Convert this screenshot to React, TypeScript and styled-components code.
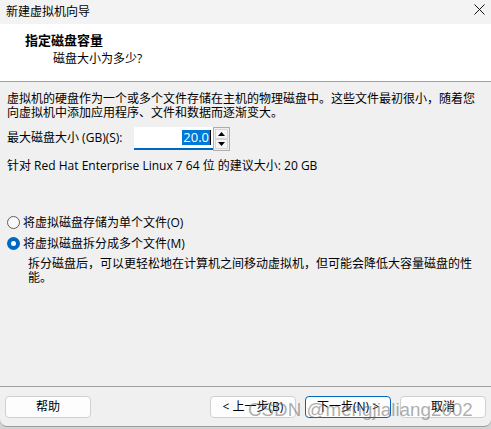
import React from "react";
import styled, { createGlobalStyle, css } from "styled-components";

const Global = createGlobalStyle`
  html, body { margin: 0; padding: 0; background: #d4d4d4; }
  body {
    font-family: "Open Sans", "Noto Sans CJK SC", sans-serif;
    font-size: 12px;
    color: #000;
  }
  #root { width: 491px; height: 429px; overflow: hidden; }
  * { box-sizing: border-box; }
`;

const Window = styled.div`
  position: relative;
  width: 491px;
  height: 427px;
  display: flex;
  flex-direction: column;
  background: #f0f0f0;
  border-bottom: 1px solid #9c9c9c;
  border-radius: 0 0 7px 7px;
  overflow: hidden;
`;

const TitleBar = styled.div`
  height: 24px;
  flex: none;
  display: flex;
  align-items: center;
  justify-content: space-between;
  padding: 0 6px;
  background: #f3f3f3;
`;

const Title = styled.span`
  font-size: 12px;
  line-height: 16px;
`;

const CloseSvg = styled.svg`
  margin-bottom: 5px;
`;

const Header = styled.div`
  height: 58px;
  flex: none;
  background: #fff;
  border-bottom: 1px solid #a0a0a0;
  padding: 8px 0 0 25px;
`;

const Heading = styled.div`
  font-weight: 700;
  font-size: 13px;
  line-height: 16px;
`;

const Subtitle = styled.div`
  margin-top: 3px;
  padding-left: 28px;
  line-height: 16px;
`;

const Content = styled.div`
  flex: 1;
  display: flex;
  flex-direction: column;
  padding: 10px 7px 0;
`;

const Para = styled.p`
  margin: 0;
  line-height: 14px;
`;

const SizeRow = styled.div`
  margin-top: 7px;
  display: flex;
  align-items: flex-start;
  height: 24px;
`;

const SizeLabel = styled.label`
  width: 127px;
  line-height: 22px;
  white-space: nowrap;
`;

const NumberField = styled.div`
  width: 79px;
  height: 23px;
  background: #fff;
  border-bottom: 2px solid #0067c0;
  display: flex;
  align-items: center;
  justify-content: flex-end;
  padding-right: 2px;
`;

const Selected = styled.span`
  background: #0078d7;
  color: #fff;
  font-size: 13px;
  line-height: 15px;
  padding: 0 1px;
`;

const Caret = styled.span`
  width: 1px;
  height: 15px;
  background: #000;
`;

const Spinner = styled.div`
  width: 17px;
  height: 24px;
  border: 1px solid #adadad;
  display: flex;
  flex-direction: column;
  padding: 1px;
`;

const SpinButton = styled.div`
  flex: 1;
  border: 1px solid #d6d6d6;
  background: #f5f5f5;
  display: flex;
  align-items: center;
  justify-content: center;
`;

const Recommend = styled.div`
  margin-top: 8px;
  line-height: 14px;
`;

const RadioRow = styled.div<{ $first?: boolean }>`
  margin-top: ${(p) => (p.$first ? "41px" : "5px")};
  display: flex;
  align-items: center;
  gap: 3px;
  height: 16px;
`;

const RadioCircle = styled.span<{ $checked?: boolean }>`
  width: 13px;
  height: 13px;
  border-radius: 50%;
  flex: none;
  display: flex;
  align-items: center;
  justify-content: center;
  ${(p) =>
    p.$checked
      ? css`
          background: #0067c0;
          &::after {
            content: "";
            width: 5px;
            height: 5px;
            border-radius: 50%;
            background: #fff;
          }
        `
      : css`
          background: #fafafa;
          border: 1px solid #5e5e5e;
        `}
`;

const Desc = styled.div`
  margin-top: 6px;
  padding-left: 21px;
  max-width: 471px;
  line-height: 14px;
`;

const Footer = styled.div`
  flex: none;
  height: 40px;
  border-top: 1px solid #a0a0a0;
  padding: 9px 5px 0;
  display: flex;
  align-items: flex-start;
`;

const NavGroup = styled.div`
  margin-left: auto;
  display: flex;
  gap: 9px;
`;

const Button = styled.button<{ $default?: boolean }>`
  width: 86px;
  height: 22px;
  padding: 0;
  font-family: inherit;
  font-size: 12px;
  color: #000;
  background: #fdfdfd;
  border: 1px solid ${(p) => (p.$default ? "#0067c0" : "#d0d0d0")};
  border-radius: 4px;
  line-height: 18px;
  white-space: nowrap;
`;

const Watermark = styled.div`
  position: absolute;
  left: 248px;
  top: 400px;
  font-family: "Liberation Sans", Arial, sans-serif;
  font-size: 18.8px;
  line-height: 20px;
  color: rgba(105, 105, 105, 0.55);
  white-space: nowrap;
  pointer-events: none;
`;

const CloseIcon = () => (
  <CloseSvg width="11" height="11" viewBox="0 0 11 11">
    <path d="M0.5 0.5 L10.5 10.5 M10.5 0.5 L0.5 10.5" stroke="#111" strokeWidth="1" fill="none" />
  </CloseSvg>
);

const Tri = ({ up }: { up?: boolean }) => (
  <svg width="7" height="4" viewBox="0 0 7 4">
    <path d={up ? "M0 4 L3.5 0 L7 4 Z" : "M0 0 L7 0 L3.5 4 Z"} fill="#000" />
  </svg>
);

export default function App() {
  return (
    <>
      <Global />
      <Window>
        <TitleBar>
          <Title>新建虚拟机向导</Title>
          <CloseIcon />
        </TitleBar>
        <Header>
          <Heading>指定磁盘容量</Heading>
          <Subtitle>磁盘大小为多少?</Subtitle>
        </Header>
        <Content>
          <Para>
            虚拟机的硬盘作为一个或多个文件存储在主机的物理磁盘中。这些文件最初很小，随着您向虚拟机中添加应用程序、文件和数据而逐渐变大。
          </Para>
          <SizeRow>
            <SizeLabel>最大磁盘大小 (GB)(S):</SizeLabel>
            <NumberField>
              <Selected>20.0</Selected>
              <Caret />
            </NumberField>
            <Spinner>
              <SpinButton>
                <Tri up />
              </SpinButton>
              <SpinButton>
                <Tri />
              </SpinButton>
            </Spinner>
          </SizeRow>
          <Recommend>针对 Red Hat Enterprise Linux 7 64 位 的建议大小: 20 GB</Recommend>
          <RadioRow $first>
            <RadioCircle />
            <span>将虚拟磁盘存储为单个文件(O)</span>
          </RadioRow>
          <RadioRow>
            <RadioCircle $checked />
            <span>将虚拟磁盘拆分成多个文件(M)</span>
          </RadioRow>
          <Desc>
            拆分磁盘后，可以更轻松地在计算机之间移动虚拟机，但可能会降低大容量磁盘的性能。
          </Desc>
        </Content>
        <Footer>
          <Button>帮助</Button>
          <NavGroup>
            <Button>&lt; 上一步(B)</Button>
            <Button $default>下一步(N) &gt;</Button>
            <Button>取消</Button>
          </NavGroup>
        </Footer>
        <Watermark>CSDN @mengjialiang2002</Watermark>
      </Window>
    </>
  );
}
